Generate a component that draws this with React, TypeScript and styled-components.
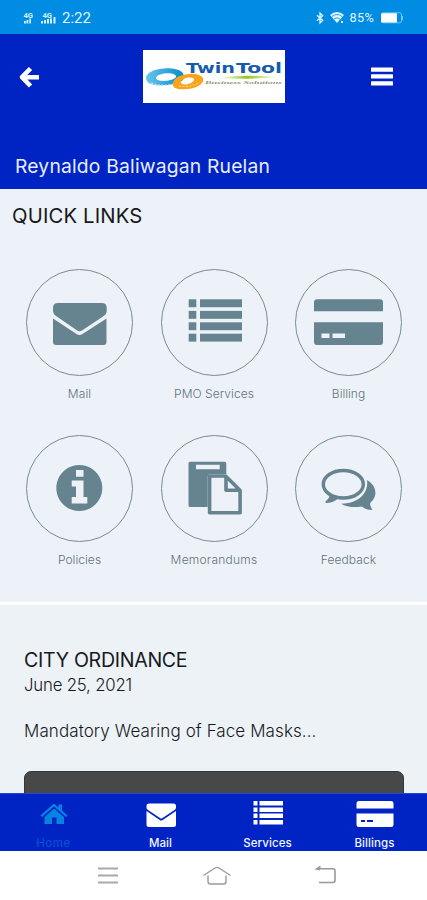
import React from 'react';
import styled, { createGlobalStyle } from 'styled-components';

const Global = createGlobalStyle`
  * { box-sizing: border-box; }
  body { margin: 0; background: #fff; font-family: Inter, "Liberation Sans", sans-serif; }
  svg { display: block; flex: none; }
`;

const Screen = styled.div`
  width: 427px;
  height: 900px;
  overflow: hidden;
  display: flex;
  flex-direction: column;
`;

const StatusBar = styled.div`
  height: 34px;
  flex: none;
  background: #008ce3;
  display: flex;
  justify-content: space-between;
  padding: 1px 23px 0 22px;
  align-items: center;
  color: #e0f6ff;
`;

const StatusGroup = styled.div<{ $gap: number }>`
  display: flex;
  align-items: center;
  gap: ${(p) => p.$gap}px;
`;

const StatusText = styled.span<{ $size: number; $spacing?: number }>`
  font-family: Roboto, sans-serif;
  font-weight: 400;
  font-size: ${(p) => p.$size}px;
  letter-spacing: ${(p) => p.$spacing ?? 0}px;
  line-height: 18px;
`;

const Header = styled.header`
  height: 155px;
  flex: none;
  background: #0024c4;
  display: flex;
  flex-direction: column;
  justify-content: space-between;
  padding: 16px 34px 11px 15px;
`;

const HeaderRow = styled.div`
  display: flex;
  justify-content: space-between;
  align-items: center;
`;

const LogoBox = styled.div`
  width: 142px;
  height: 53px;
  margin-left: 18px;
  background: #fff;
`;

const Line = styled.div<{ $size: number; $spacing?: number; $color?: string; $weight?: number; $height: number }>`
  font-size: ${(p) => p.$size}px;
  letter-spacing: ${(p) => p.$spacing ?? 0}px;
  color: ${(p) => p.$color ?? '#17191c'};
  font-weight: ${(p) => p.$weight ?? 400};
  line-height: ${(p) => p.$height}px;
  white-space: nowrap;
`;

const QuickLinks = styled.section`
  height: 412.5px;
  flex: none;
  background: #edf2f8;
  padding-top: 15px;
`;

const SectionTitle = styled.div`
  padding-left: 12px;
`;

const LinkGrid = styled.div`
  display: grid;
  grid-template-columns: repeat(3, 134.5px);
  grid-auto-rows: 165.8px;
  padding: 41px 0 0 12.25px;
`;

const LinkItem = styled.div`
  display: flex;
  flex-direction: column;
  align-items: center;
  gap: 9px;
`;

const News = styled.section`
  height: 188px;
  flex: none;
  margin-top: 3.5px;
  background: #edf2f7;
  padding: 43px 23px 0 24px;
  display: flex;
  flex-direction: column;
  overflow: hidden;
`;

const Gap = styled.div`
  height: 23px;
  flex: none;
`;

const MediaCard = styled.div`
  height: 60px;
  flex: none;
  margin-top: 27.5px;
  background: #484848;
  border: 1px solid #363636;
  border-radius: 7px;
`;

const TabBar = styled.nav`
  height: 58px;
  flex: none;
  background: #0024c4;
  border-top: 1px solid #2549c8;
  display: grid;
  grid-template-columns: repeat(4, 107px);
  overflow: hidden;
`;

const Tab = styled.div<{ $active?: boolean }>`
  display: flex;
  flex-direction: column;
  align-items: center;
  color: ${(p) => (p.$active ? '#0783e2' : '#fff')};
`;

const TabLabel = styled.span<{ $active?: boolean }>`
  font-size: 11.5px;
  line-height: 16px;
  margin-top: 1px;
  font-weight: 500;
  letter-spacing: ${(p) => (p.$active ? 0.5 : 0.1)}px;
  color: ${(p) => (p.$active ? '#0550d4' : '#f2f6ff')};
`;

const SystemBar = styled.div`
  flex: 1;
  background: #fff;
  display: flex;
  justify-content: space-between;
  padding: 14px 90px 0 97px;
`;

const Slate = '#668390';

const glyphs: Record<string, React.ReactNode> = {
  mail: (
    <>
      <path d="M32 34h44q4.700 0 4.700 5v3q0 3-3 5L56 61.500q-2.400 1.500-4.800 0L30 47q-3-2-3-5v-3q0-5 5-5z" />
      <path d="M27 49.500 50.500 65q3 1.800 6 0l24-15.500V73q0 3-3 3H30q-3 0-3-3z" />
    </>
  ),
  list: (
    <>
      {[30.3, 41.9, 53.3, 64.7].map((y) => (
        <React.Fragment key={y}>
          <rect x="27.7" y={y} width="7.600" height="7.900" />
          <rect x="39" y={y} width="42" height="7.900" />
        </React.Fragment>
      ))}
    </>
  ),
  card: (
    <path
      fillRule="evenodd"
      d="M22 30.300h63q3 0 3 3v9H19v-9q0-3 3-3zM19 53.300h69V73q0 3-3 3H22q-3 0-3-3zM26.500 64.500V69H34.500V64.500zM37.500 64.500V69H50V64.500z"
    />
  ),
  info: (
    <path
      fillRule="evenodd"
      d="M53.300 30a23 23 0 1 0 .01 0zM50 35h7.500v6.800H50zM45.700 45.500h11.800V62h3.800v6.400H45.700V62H50V51.500h-4.300z"
    />
  ),
  paste: (
    <>
      <path fillRule="evenodd" d="M29 26.700h34.500q1.800 0 1.800 1.800V39H50q-3.300 0-3.300 3v30H29q-1.500 0-1.500-1.500V28.200q0-1.500 1.500-1.500zM35 29.700v4.500h23.700v-4.500z" />
      <path d="M48.600 41h16l14.500 14.500v22.200H48.600zM65 41.500V55.300h14" fill="#edf2f8" stroke={Slate} strokeWidth="3.600" strokeLinejoin="round" />
    </>
  ),
  chat: (
    <>
      <path d="M72 45C82 51 83 61 75.500 67.500C74.500 70 76 72 77.500 75Q72 75.500 66.500 71.500C59 73 51 71.500 46 68.700C62 69 74 59 72 45z" />
      <ellipse cx="48.300" cy="49.200" rx="20" ry="13.800" fill="none" stroke={Slate} strokeWidth="3.500" />
      <path d="M33.500 57.500C36 62 33 64 30.500 66.500Q30 68.300 32.500 68Q38.500 67.500 42.500 64z" />
    </>
  ),
};

function CircleIcon({ name }: { name: string }) {
  return (
    <svg width="107" height="107" viewBox="0 0 107 107" fill={Slate}>
      <circle cx="53.500" cy="53.500" r="53" fill="none" stroke="#788c8e" strokeWidth="1" />
      {glyphs[name]}
    </svg>
  );
}

function Logo() {
  return (
    <svg width="142" height="53" viewBox="0 0 142 53">
      <defs>
        <linearGradient id="swoosh">
          <stop offset="0" stopColor="#b8dd55" stopOpacity=".1" />
          <stop offset=".5" stopColor="#8cc51e" />
          <stop offset="1" stopColor="#b8dd55" stopOpacity=".2" />
        </linearGradient>
        <linearGradient id="ring">
          <stop offset="0" stopColor="#66c5ee" />
          <stop offset="1" stopColor="#078bc9" />
        </linearGradient>
      </defs>
      <path fillRule="evenodd" fill="url(#ring)" d="M3 28C3 18 31 15 39 22C46 31 34 35 22 35C11 36 3 34 3 28zM13 28C13 32 29 32 33 27C34 22 15 22 13 28z" />
      <path fillRule="evenodd" fill="#f8a51c" d="M30 33C31 25 50 21 58 26C65 31 55 39 43 39C34 40 29 38 30 33zM38 32C37 36 49 35 51 30C52 26 39 27 38 32z" />
      <path d="M8 33Q20 37 30 34" fill="none" stroke="#c4eaf7" strokeWidth="1.200" strokeDasharray="2 1.500" />
      <path d="M36 36Q46 38 55 33" fill="none" stroke="#ffd998" strokeWidth="1" strokeDasharray="2 1.500" />
      <g fontFamily="DejaVu Sans" fontWeight="700" fontSize="14.800" fill="#155cad">
        <text x="43" y="23.300" textLength="49" lengthAdjust="spacingAndGlyphs">Twin</text>
        <text x="93" y="23.300" textLength="46" lengthAdjust="spacingAndGlyphs">Tool</text>
      </g>
      <path d="M74 28Q102 24 134 27Q106 30 74 28z" fill="url(#swoosh)" />
      <text x="62" y="34" textLength="77" lengthAdjust="spacingAndGlyphs" fontFamily="Liberation Serif" fontStyle="italic" fontWeight="700" fontSize="5" fill="#99907c">Business Solutions</text>
    </svg>
  );
}

function Signal({ full }: { full?: boolean }) {
  return (
    <svg width={full ? 15 : 12} height="14" viewBox={full ? '0 0 15 14' : '0 0 12 14'} fill="#d5f3ff">
      <text x="1.500" y="6.500" fontFamily="Roboto" fontWeight="700" fontSize="7.500" textLength="9.500" lengthAdjust="spacingAndGlyphs">4G</text>
      <path d={full ? 'M0 10h2v2.500H0zM3 9h2v3.500H3zM6 8h2v4.500H6zM9 7.500h2v5H9zM12.500 6h2v6.500h-2z' : 'M2 10h1.800v2.500H2zM4.500 9h1.800v3.500H4.500zM7.300 7.500H9V12.500H7.300z'} />
    </svg>
  );
}

const links = [
  ['mail', 'Mail'],
  ['list', 'PMO Services'],
  ['card', 'Billing'],
  ['info', 'Policies'],
  ['paste', 'Memorandums'],
  ['chat', 'Feedback'],
];

const labelSpacing: Record<string, number> = { 'PMO Services': 0.05, Billing: 0, Policies: 0.05, Memorandums: 0.23 };

function TabIcon({ name }: { name: string }) {
  return (
    <svg width="40" height="40" viewBox="0 0 40 40" fill="currentColor">
      {name === 'home' && (
        <path d="M20 9.500 24.500 13.500V10.500H28V16.500L33.500 21.500 32 23 20 12.500 8 23 6.500 21.500 19 10.300Q20 9.500 21 10.300zM20 14.500 30 23V30H22.500V23.500H18V30H10.500V23z" />
      )}
      {name === 'mail' && (
        <path d="M8 9.500H32.500Q35 9.500 35 12V13.500Q35 15 33.500 16L21.500 24Q20.200 25 19 24L7 16Q5.500 15 5.500 13.500V12Q5.500 9.500 8 9.500zM5.500 17 18.800 26Q20.200 27 21.700 26L35 17V30.500Q35 33 32.500 33H8Q5.500 33 5.500 30.500z" />
      )}
      {name === 'list' && (
        <path d="M5.500 7H9.500V11.500H5.500zM11.500 7H35V11.500H11.500zM5.500 13.500H9.500V18H5.500zM11.500 13.500H35V18H11.500zM5.500 19.500H9.500V24H5.500zM11.500 19.500H35V24H11.500zM5.500 26H9.500V30.500H5.500zM11.500 26H35V30.500H11.500z" />
      )}
      {name === 'card' && (
        <path fillRule="evenodd" d="M4 7H36Q38.500 7 38.500 9.500V14.500H1.500V9.500Q1.500 7 4 7zM1.500 19.500H38.500V30.500Q38.500 33 36 33H4Q1.500 33 1.500 30.500zM6 26V28H10V26zM12 26V28H18V26z" />
      )}
    </svg>
  );
}

const tabs = [
  ['home', 'Home'],
  ['mail', 'Mail'],
  ['list', 'Services'],
  ['card', 'Billings'],
];

export default function App() {
  return (
    <Screen>
      <Global />
      <StatusBar>
        <StatusGroup $gap={7}>
          <Signal />
          <StatusGroup $gap={6}>
            <Signal full />
            <StatusText $size={15}>2:22</StatusText>
          </StatusGroup>
        </StatusGroup>
        <StatusGroup $gap={6}>
          <svg width="8" height="14" viewBox="0 0 9 14" fill="none" stroke="currentColor" strokeWidth="1.500">
            <path d="M1 4 7.500 9.500 4.500 12.500V1.500L7.500 4.500 1 10" />
          </svg>
          <svg width="14" height="13" viewBox="0 0 14 13">
            <path d="M0 4Q7-2 14 4L7 12z" fill="currentColor" />
            <path d="M2 5.500Q7 1.500 12 5.500M4 8Q7 5.500 10 8" fill="none" stroke="#008ce3" strokeWidth=".8" />
            <path d="M11 10h2v2h-2z" fill="currentColor" />
          </svg>
          <StatusText $size={12.7} $spacing={0.3}>85%</StatusText>
          <svg width="24" height="12" viewBox="0 0 24 12">
            <rect x="1.500" y=".8" width="20" height="10" rx="2" fill="none" stroke="#72c8f6" />
            <rect x="1" y="1.200" width="16" height="9.200" rx="1" fill="#fff" />
            <path d="M22.500 4v4" stroke="#72c8f6" />
          </svg>
        </StatusGroup>
      </StatusBar>
      <Header>
        <HeaderRow>
          <svg width="24" height="24" viewBox="0 0 24 24" fill="none" stroke="#fff" strokeWidth="4.600" strokeLinejoin="round">
            <path d="M15.500 3.500 7 12.200 15.500 21M7 12.200H24" />
          </svg>
          <LogoBox>
            <Logo />
          </LogoBox>
          <svg width="22" height="20" viewBox="0 0 22 20" fill="#fff">
            <rect y="0.500" width="22" height="4.300" rx=".6" />
            <rect y="7.300" width="22" height="4.300" rx=".6" />
            <rect y="14.200" width="22" height="4.300" rx=".6" />
          </svg>
        </HeaderRow>
        <Line $size={19.3} $height={24} $color="#e6efff" $spacing={0.19}>Reynaldo Baliwagan Ruelan</Line>
      </Header>
      <QuickLinks>
        <SectionTitle>
          <Line $size={20.3} $height={24} $spacing={0.15}>QUICK LINKS</Line>
        </SectionTitle>
        <LinkGrid>
          {links.map(([icon, label]) => (
            <LinkItem key={label}>
              <CircleIcon name={icon} />
              <Line $size={12} $height={18} $weight={300} $color="#5f747c" $spacing={labelSpacing[label] ?? 0.1}>
                {label}
              </Line>
            </LinkItem>
          ))}
        </LinkGrid>
      </QuickLinks>
      <News>
        <Line $size={19.6} $height={25} $spacing={-0.3}>CITY ORDINANCE</Line>
        <Line $size={16.8} $height={24} $weight={350} $spacing={-0.2}>June 25, 2021</Line>
        <Gap />
        <Line $size={17} $height={23} $weight={300} $spacing={0.09}>Mandatory Wearing of Face Masks...</Line>
        <MediaCard />
      </News>
      <TabBar>
        {tabs.map(([icon, label]) => (
          <Tab key={label} $active={icon === 'home'}>
            <TabIcon name={icon} />
            <TabLabel $active={icon === 'home'}>{label}</TabLabel>
          </Tab>
        ))}
      </TabBar>
      <SystemBar>
        <svg width="22" height="22" viewBox="0 0 22 22" fill="none" stroke="#a9a9a9" strokeWidth="1.800">
          <path d="M1 3.500H21M1 10.500H21M1 17.500H21" />
        </svg>
        <svg width="30" height="22" viewBox="0 0 30 22" fill="none" stroke="#9b9b9b" strokeWidth="1.400">
          <path d="M1.500 10.500 13 3Q15 1.800 17 3L28.500 10.500M6 10.500V16.500Q6 19 8.500 19H21.500Q24 19 24 16.500V10.500" />
        </svg>
        <svg width="22" height="22" viewBox="0 0 22 22" fill="none" stroke="#999" strokeWidth="1.600">
          <path d="M3 3.800H18Q20 3.800 20 6V15.500Q20 17.500 18 17.500H4M5.500 1.500 1.500 4 5 4.800" />
        </svg>
      </SystemBar>
    </Screen>
  );
}
